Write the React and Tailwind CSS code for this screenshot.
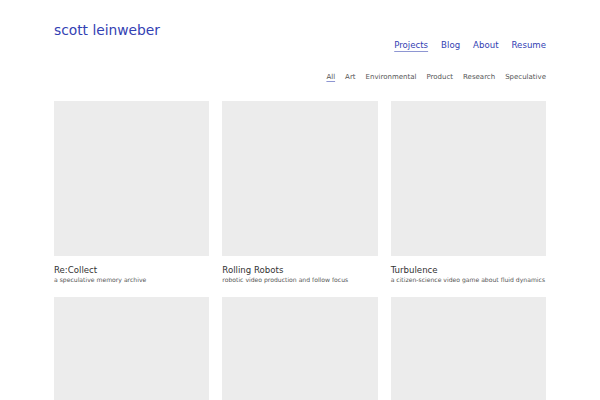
const projects = [
  { title: "Re:Collect", desc: "a speculative memory archive" },
  { title: "Rolling Robots", desc: "robotic video production and follow focus" },
  { title: "Turbulence", desc: "a citizen-science video game about fluid dynamics" },
  { title: "", desc: "" },
  { title: "", desc: "" },
  { title: "", desc: "" },
];

const nav = ["Projects", "Blog", "About", "Resume"];
const filters = ["All", "Art", "Environmental", "Product", "Research", "Speculative"];

export default function App() {
  return (
    <div className="min-h-screen bg-white font-['DejaVu_Sans',sans-serif]">
      <div className="mx-auto w-[492px] pt-[22px]">
        <header className="flex flex-col">
          <h1 className="text-[13.8px] leading-[16px] text-[#3341b3]">scott leinweber</h1>
          <nav className="mt-[2px] flex justify-end gap-[13px] text-[8.6px] leading-[10px] text-[#3341b3]">
            {nav.map((n, i) => (
              <a
                key={n}
                className={i === 0 ? "underline decoration-[#8e96d2] underline-offset-[3px]" : ""}
              >
                {n}
              </a>
            ))}
          </nav>
        </header>

        <div className="mt-[22px] flex justify-end gap-[10px] text-[7px] leading-[10px] text-[#555]">
          {filters.map((f, i) => (
            <span
              key={f}
              className={i === 0 ? "underline decoration-[#8e96d2] underline-offset-[2px]" : ""}
            >
              {f}
            </span>
          ))}
        </div>

        <div className="mt-[19px] grid grid-cols-3 gap-x-[13px] gap-y-[12px]">
          {projects.map((p, i) => (
            <div key={i}>
              <div className="aspect-square w-full bg-[#ececec]" />
              {p.title && (
                <>
                  <div className="mt-[9px] text-[8.6px] leading-[10px] text-[#333]">{p.title}</div>
                  <div className="text-[6.1px] leading-[10px] text-[#555]">{p.desc}</div>
                </>
              )}
            </div>
          ))}
        </div>
      </div>
    </div>
  );
}
